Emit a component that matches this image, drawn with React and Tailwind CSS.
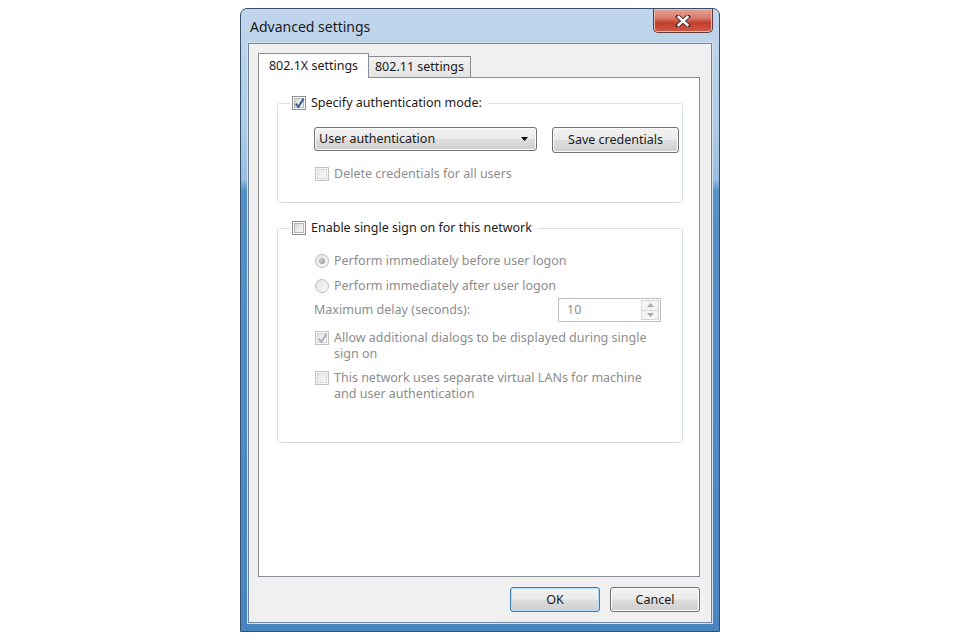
import React from 'react'

function Checkbox({ checked, disabled }) {
  return (
    <span
      className={`flex h-[14px] w-[14px] shrink-0 items-center justify-center border ${
        disabled ? 'border-[#c3c3c3] bg-[#f7f7f7]' : 'border-[#8e8f8f] bg-white'
      }`}
    >
      <span
        className={`relative flex h-[10px] w-[10px] items-center justify-center border ${
          disabled
            ? 'border-[#dadada] bg-[linear-gradient(135deg,#e6e6e6,#fbfbfb)]'
            : 'border-[#b4b4b4] bg-[linear-gradient(135deg,#d8d8d8,#f9f9f9)]'
        }`}
      >
        {checked && (
          <svg viewBox="0 0 10 10" className="absolute -left-[1px] -top-[2px] h-[12px] w-[11px]">
            <path
              d="M1.5 5.5 L4 8.5 L8.8 1"
              fill="none"
              stroke={disabled ? '#a9b1bb' : '#3c5a95'}
              strokeWidth="1.8"
            />
          </svg>
        )}
      </span>
    </span>
  )
}

function Radio({ checked }) {
  return (
    <span className="flex h-[14px] w-[14px] shrink-0 items-center justify-center rounded-full border border-[#bcbcbc] bg-[linear-gradient(135deg,#e2e2e2,#fafafa)]">
      {checked && <span className="h-[6px] w-[6px] rounded-full bg-[radial-gradient(circle_at_35%_35%,#cfcfcf,#8f8f8f)]" />}
    </span>
  )
}

function Button({ children, w, primary }) {
  return (
    <div
      className={`flex h-[25px] ${w} items-center justify-center rounded-[3px] border bg-[linear-gradient(to_bottom,#f2f2f2_0%,#ebebeb_48%,#dddddd_52%,#cfcfcf_100%)] ${
        primary ? 'border-[#3d7bad] shadow-[inset_0_0_0_1px_#b3e0f9]' : 'border-[#707070] shadow-[inset_0_0_0_1px_#fbfbfb]'
      }`}
    >
      {children}
    </div>
  )
}

export default function App() {
  return (
    <div className="flex min-h-[640px] justify-center bg-white pt-[8px] font-['Noto_Sans',sans-serif] text-[12.5px] leading-[16px] text-[#1b1b1b]">
      <div className="flex h-[624px] w-[480px] flex-col rounded-t-[7px] border border-[#34506d] bg-[linear-gradient(to_bottom,#c1d6ec_0px,#aecbe6_120px,#9bbde0_170px,#5690c7_182px,#4985c0_100%)]">
        {/* title bar */}
        <div className="flex h-[34px] shrink-0 items-start justify-between">
          <span className="pl-[9px] pt-[8px] text-[14px] leading-[19px] text-[#1a1a1a]">Advanced settings</span>
          <div className="mr-[6px] flex h-[24px] w-[60px] items-center justify-center rounded-b-[5px] border border-t-0 border-[#5e3c3c] bg-[linear-gradient(to_bottom,#e4a697_0%,#d77a6b_40%,#c23d2c_60%,#cf5a45_100%)] shadow-[inset_0_0_0_1px_#efb9ab]">
            <svg viewBox="0 0 16 12" className="h-[12px] w-[16px]">
              <path d="M3 1.5 L13 10.5 M13 1.5 L3 10.5" stroke="#4a2a2a" strokeWidth="4.2" strokeLinecap="square" />
              <path d="M3.6 2 L12.4 10 M12.4 2 L3.6 10" stroke="#ffffff" strokeWidth="2.4" strokeLinecap="square" />
            </svg>
          </div>
        </div>

        {/* client area */}
        <div className="mx-[7px] flex h-[580px] flex-col border border-[#71869c] bg-[#f0f0f0] pl-[9px] pr-[11px] pt-[9px] shadow-[0_0_0_1px_#d3e2f1]">
          {/* tabs */}
          <div className="flex h-[24px] items-end">
            <div className="relative z-10 -mb-px flex h-[25px] w-[111px] items-start justify-center border border-b-0 border-[#898c95] bg-white pt-[4px]">
              802.1X settings
            </div>
            <div className="flex h-[21px] w-[102px] items-center justify-center border border-b-0 border-l-0 border-[#898c95] bg-[linear-gradient(to_bottom,#f2f2f2,#e3e3e3)]">
              802.11 settings
            </div>
          </div>

          {/* tab panel */}
          <div className="flex h-[500px] flex-col border border-[#898c95] bg-white pl-[18px] pr-[16px] pt-[17px]">
            <fieldset className="rounded-[3px] border border-[#d5dfe5] pb-[20px] pl-[36px]">
              <legend className="-ml-[24px] flex h-[16px] items-center gap-[5px] px-[2px]">
                <Checkbox checked />
                <span className="pr-[4px]">Specify authentication mode:</span>
              </legend>
              <div className="mt-[16px] flex items-start gap-[15px]">
                <div className="flex h-[24px] w-[223px] items-center justify-between rounded-[3px] border border-[#707070] bg-[linear-gradient(to_bottom,#f2f2f2_0%,#ebebeb_48%,#dddddd_52%,#cfcfcf_100%)] pl-[4px] pr-[8px] shadow-[inset_0_0_0_1px_#fbfbfb]">
                  <span>User authentication</span>
                  <svg viewBox="0 0 7 4" className="h-[4px] w-[7px]">
                    <path d="M0 0 H7 L3.5 4 Z" fill="#000" />
                  </svg>
                </div>
                <Button w="w-[127px] h-[26px]">Save credentials</Button>
              </div>
              <div className="ml-[1px] mt-[13px] flex h-[16px] items-center gap-[5px] text-[#8d8d8d]">
                <Checkbox disabled />
                <span>Delete credentials for all users</span>
              </div>
            </fieldset>

            <fieldset className="mt-[17px] h-[223px] rounded-[3px] border border-[#d5dfe5] pl-[36px]">
              <legend className="-ml-[24px] flex h-[16px] items-center gap-[5px] px-[2px]">
                <Checkbox />
                <span className="pr-[4px]">Enable single sign on for this network</span>
              </legend>
              <div className="text-[#8d8d8d]">
                <div className="ml-[1px] mt-[17px] flex h-[16px] items-center gap-[5px]">
                  <Radio checked />
                  <span>Perform immediately before user logon</span>
                </div>
                <div className="ml-[1px] mt-[9px] flex h-[16px] items-center gap-[5px]">
                  <Radio />
                  <span>Perform immediately after user logon</span>
                </div>
                <div className="mt-[4px] flex h-[24px] items-center justify-between pr-[21px]">
                  <span>Maximum delay (seconds):</span>
                  <div className="flex h-[24px] w-[103px] items-center justify-between border border-[#bcc0c4] bg-white pl-[8px] pr-[1px]">
                    <span>10</span>
                    <div className="flex h-[20px] w-[18px] flex-col">
                      <div className="flex flex-1 items-center justify-center border border-[#d6d6d6] bg-[#f4f4f4]">
                        <svg viewBox="0 0 7 4" className="h-[4px] w-[7px]">
                          <path d="M0 4 H7 L3.5 0 Z" fill="#a8a8a8" />
                        </svg>
                      </div>
                      <div className="flex flex-1 items-center justify-center border border-t-0 border-[#d6d6d6] bg-[#f4f4f4]">
                        <svg viewBox="0 0 7 4" className="h-[4px] w-[7px]">
                          <path d="M0 0 H7 L3.5 4 Z" fill="#a8a8a8" />
                        </svg>
                      </div>
                    </div>
                  </div>
                </div>
                <div className="ml-[1px] mt-[8px] flex items-start gap-[5px]">
                  <span className="pt-[1px]">
                    <Checkbox checked disabled />
                  </span>
                  <span>
                    Allow additional dialogs to be displayed during single
                    <br />
                    sign on
                  </span>
                </div>
                <div className="ml-[1px] mt-[8px] flex items-start gap-[5px]">
                  <span className="pt-[1px]">
                    <Checkbox disabled />
                  </span>
                  <span>
                    This network uses separate virtual LANs for machine
                    <br />
                    and user authentication
                  </span>
                </div>
              </div>
            </fieldset>
          </div>

          {/* dialog buttons */}
          <div className="mt-[10px] flex justify-end gap-[10px]">
            <Button w="w-[90px]" primary>
              OK
            </Button>
            <Button w="w-[90px]">Cancel</Button>
          </div>
        </div>
      </div>
    </div>
  )
}
